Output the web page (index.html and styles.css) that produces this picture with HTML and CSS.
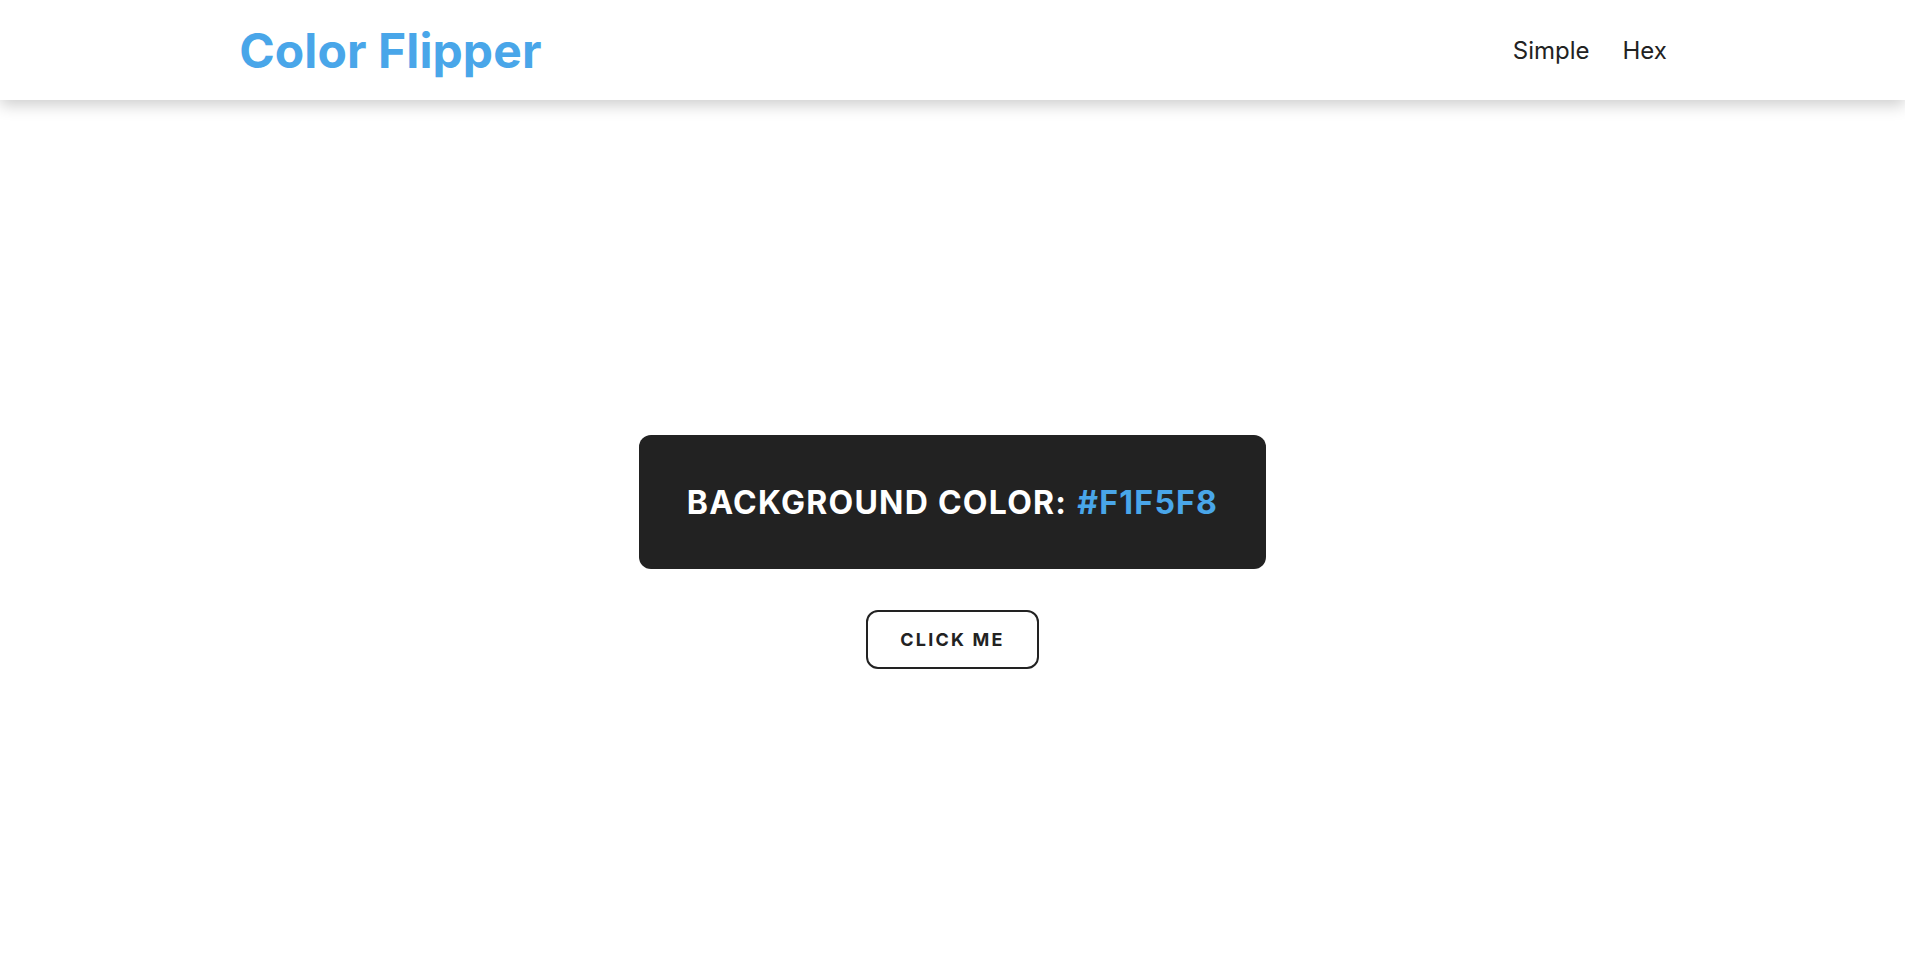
FILE: index.html
```html
<!DOCTYPE html>
<html lang="en">
<head>
<meta charset="UTF-8">
<title>Color Flipper</title>
<link rel="stylesheet" href="styles.css">
</head>
<body>
<nav class="nav">
  <div class="nav-center">
    <h4 class="logo">Color Flipper</h4>
    <ul class="nav-links">
      <li><a href="#">Simple</a></li>
      <li><a href="#">Hex</a></li>
    </ul>
  </div>
</nav>
<main class="main">
  <div class="container">
    <h2 class="color-box">background color: <span class="color">#F1F5F8</span></h2>
    <button class="btn">click me</button>
  </div>
</main>
</body>
</html>
```
FILE: styles.css
```css
* { margin: 0; padding: 0; box-sizing: border-box; }
body {
  font-family: Inter, "Noto Sans", sans-serif;
  background: #ffffff;
  color: #222222;
  min-height: 100vh;
}
.nav {
  height: 100px;
  background: #ffffff;
  box-shadow: 0 5px 15px rgba(0, 0, 0, 0.2);
  display: flex;
  align-items: center;
  position: relative;
  z-index: 1;
}
.nav-center {
  width: 75%;
  margin: 0 auto;
  display: flex;
  justify-content: space-between;
  align-items: center;
}
.logo {
  font-size: 48px;
  font-weight: 700;
  color: #49a6e9;
  letter-spacing: 0.1px;
  margin-left: 1px;
}
.nav-links {
  list-style: none;
  display: flex;
  gap: 33px;
}
.nav-links a {
  text-decoration: none;
  color: #222222;
  font-size: 24px;
  font-weight: 400;
}
.main {
  display: flex;
  justify-content: center;
  padding-top: 335px;
}
.container {
  display: flex;
  flex-direction: column;
  align-items: center;
}
.color-box {
  background: #222222;
  color: #ffffff;
  padding: 0 48px;
  height: 134px;
  display: flex;
  align-items: center;
  border-radius: 12px;
  font-size: 32px;
  font-weight: 700;
  letter-spacing: 1.25px;
  text-transform: uppercase;
  margin-bottom: 41px;
}
.color { color: #49a6e9; margin-left: 10px; }
.btn {
  font-family: inherit;
  width: 173px;
  height: 59px;
  background: transparent;
  border: 2px solid #222222;
  border-radius: 12px;
  font-size: 18px;
  font-weight: 700;
  letter-spacing: 2.2px;
  text-transform: uppercase;
  color: #222222;
  cursor: pointer;
}
```
